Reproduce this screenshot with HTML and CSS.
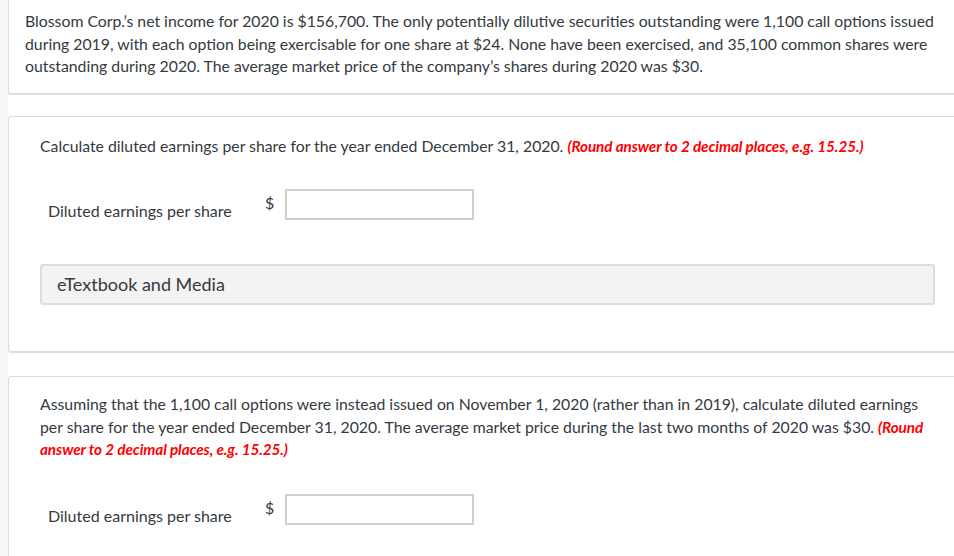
FILE: index.html
```html
<!DOCTYPE html>
<html>
<head>
<meta charset="utf-8">
<link rel="stylesheet" href="styles.css">
</head>
<body>
<div class="page">
  <section class="card card-intro">
    <p class="text">Blossom Corp.’s net income for 2020 is $156,700. The only potentially dilutive securities outstanding were 1,100 call options issued during 2019, with each option being exercisable for one share at $24. None have been exercised, and 35,100 common shares were outstanding during 2020. The average market price of the company’s shares during 2020 was $30.</p>
  </section>

  <section class="card card-q card-q1">
    <p class="text">Calculate diluted earnings per share for the year ended December 31, 2020. <em class="hint">(Round answer to 2 decimal places, e.g. 15.25.)</em></p>
    <div class="answer-row">
      <span class="answer-label">Diluted earnings per share</span>
      <span class="currency">$</span>
      <span class="answer-input"></span>
    </div>
    <div class="media-box">eTextbook and Media</div>
  </section>

  <section class="card card-q">
    <p class="text">Assuming that the 1,100 call options were instead issued on November 1, 2020 (rather than in 2019), calculate diluted earnings per share for the year ended December 31, 2020. The average market price during the last two months of 2020 was $30. <em class="hint">(Round answer to 2 decimal places, e.g. 15.25.)</em></p>
    <div class="answer-row">
      <span class="answer-label">Diluted earnings per share</span>
      <span class="currency">$</span>
      <span class="answer-input"></span>
    </div>
  </section>
</div>
</body>
</html>
```

FILE: styles.css
```css
html, body {
  margin: 0;
  padding: 0;
  background: #ffffff;
  overflow: hidden;
}

body {
  font-family: Lato, "Liberation Sans", sans-serif;
  color: #343a40;
  width: 954px;
  height: 556px;
}

.page {
  border-left: 8px solid #f7f7f7;
  min-height: 556px;
  width: 1000px;
  box-sizing: border-box;
}

.card {
  width: 958px;
  box-sizing: border-box;
  border: 1px solid #dcdcdc;
  border-radius: 3px;
  box-shadow: 0 1px 0 #dedede;
  background: #ffffff;
}

.card-intro {
  border-top: none;
  border-top-left-radius: 0;
  border-top-right-radius: 0;
  padding: 10px 16px 15px 16px;
  margin-bottom: 22px;
}

.card-q {
  padding: 16px 30px 46px 31px;
}

.card-q1 {
  margin-bottom: 24px;
  padding-top: 18px;
}

.text {
  margin: 0;
  font-size: 15.8px;
  line-height: 22.5px;
}

.hint {
  color: #ff0000;
  font-weight: 700;
  font-style: italic;
  font-size: 15.3px;
  line-height: 20px;
  letter-spacing: -0.1px;
}

.answer-row {
  display: flex;
  align-items: flex-start;
  margin-top: 33px;
  height: 31px;
}

.card-q1 .answer-row {
  margin-top: 32px;
}

.answer-label {
  width: 217px;
  padding-left: 8px;
  padding-top: 12px;
  font-size: 16px;
  line-height: 20px;
}

.currency {
  width: 20px;
  font-size: 16px;
  line-height: 20px;
  padding-top: 4px;
}

.answer-input {
  width: 185px;
  height: 27px;
  border: 2px solid #cfcfcf;
  background: #ffffff;
}

.media-box {
  margin-top: 44px;
  height: 37px;
  border: 2px solid #dddddd;
  border-radius: 3px;
  background: #f3f3f3;
  padding-left: 15px;
  font-size: 18px;
  line-height: 37px;
  color: #343a40;
}
```
